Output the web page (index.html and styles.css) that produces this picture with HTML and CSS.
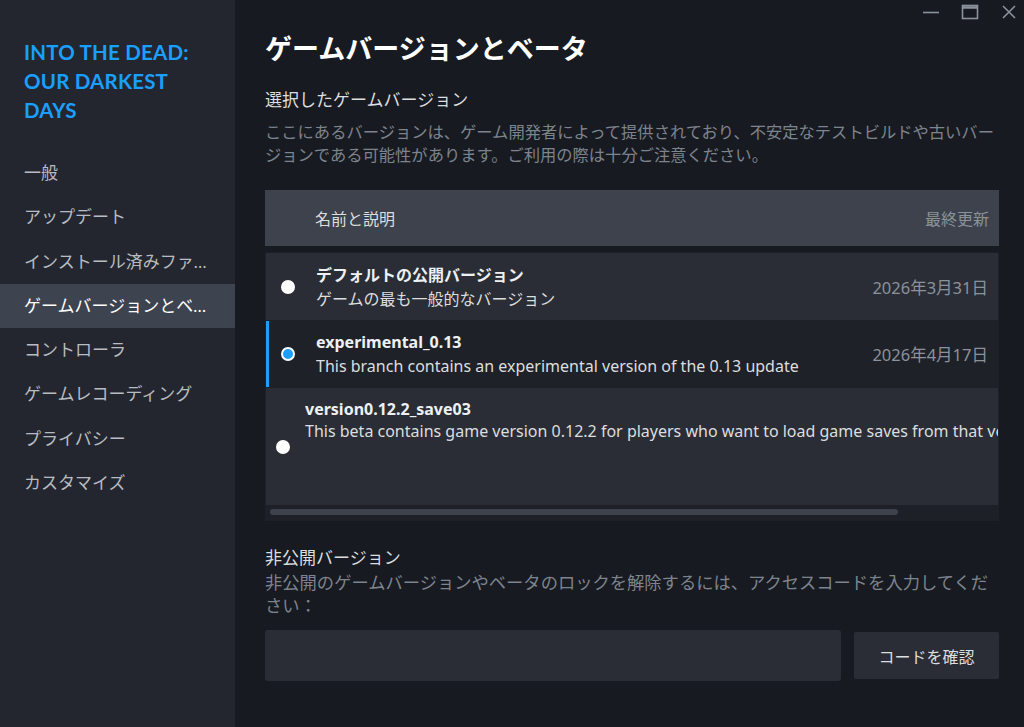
FILE: index.html
```html
<!DOCTYPE html>
<html lang="ja">
<head>
<meta charset="utf-8">
<title>ゲームバージョンとベータ</title>
<link rel="stylesheet" href="styles.css">
</head>
<body>
<div class="app">
  <aside class="sidebar">
    <div class="game-title">INTO THE DEAD:<br>OUR DARKEST<br>DAYS</div>
    <nav class="nav">
      <div class="nav-item">一般</div>
      <div class="nav-item">アップデート</div>
      <div class="nav-item">インストール済みファイル</div>
      <div class="nav-item active">ゲームバージョンとベータ</div>
      <div class="nav-item">コントローラ</div>
      <div class="nav-item">ゲームレコーディング</div>
      <div class="nav-item">プライバシー</div>
      <div class="nav-item">カスタマイズ</div>
    </nav>
  </aside>
  <main class="main">
    <div class="win-controls">
      <svg class="win-btn" width="18" height="18" viewBox="0 0 18 18"><path d="M1 9.5h16" stroke="#8b929a" stroke-width="1.6" fill="none"/></svg>
      <svg class="win-btn" width="18" height="18" viewBox="0 0 18 18"><rect x="1.5" y="2.5" width="15" height="13" stroke="#8b929a" stroke-width="1.6" fill="none"/><path d="M1.5 4.5h15" stroke="#8b929a" stroke-width="2.5"/></svg>
      <svg class="win-btn" width="18" height="18" viewBox="0 0 18 18"><path d="M3 3l12 12M15 3L3 15" stroke="#8b929a" stroke-width="1.6" fill="none"/></svg>
    </div>
    <h1 class="page-title">ゲームバージョンとベータ</h1>
    <h2 class="section-title">選択したゲームバージョン</h2>
    <p class="section-desc">ここにあるバージョンは、ゲーム開発者によって提供されており、不安定なテストビルドや古いバージョンである可能性があります。ご利用の際は十分ご注意ください。</p>

    <div class="table">
      <div class="thead">
        <span class="th-name">名前と説明</span>
        <span class="th-date">最終更新</span>
      </div>
      <div class="tbody">
        <div class="row">
          <span class="radio"></span>
          <div class="row-text">
            <div class="row-title">デフォルトの公開バージョン</div>
            <div class="row-desc">ゲームの最も一般的なバージョン</div>
          </div>
          <span class="row-date">2026年3月31日</span>
        </div>
        <div class="row selected">
          <span class="radio checked"></span>
          <div class="row-text">
            <div class="row-title">experimental_0.13</div>
            <div class="row-desc">This branch contains an experimental version of the 0.13 update</div>
          </div>
          <span class="row-date">2026年4月17日</span>
        </div>
        <div class="row tall">
          <span class="radio"></span>
          <div class="row-text top">
            <div class="row-title">version0.12.2_save03</div>
            <div class="row-desc nowrap">This beta contains game version 0.12.2 for players who want to load game saves from that version</div>
          </div>
        </div>
        <div class="hscroll"><div class="hscroll-thumb"></div></div>
      </div>
    </div>

    <h2 class="section-title private">非公開バージョン</h2>
    <p class="section-desc big">非公開のゲームバージョンやベータのロックを解除するには、アクセスコードを入力してください：</p>
    <div class="code-row">
      <div class="code-input"></div>
      <button class="code-btn">コードを確認</button>
    </div>
  </main>
</div>
</body>
</html>
```
FILE: styles.css
```css
* { box-sizing: border-box; }
html, body { margin: 0; padding: 0; }
body {
  background: #171a21;
  font-family: "Lato", "Noto Sans CJK JP", sans-serif;
  color: #dcdedf;
  overflow: hidden;
}
.app {
  display: flex;
  width: 1024px;
  height: 727px;
}
.sidebar {
  width: 235px;
  flex: 0 0 235px;
  background: #23262e;
  padding-top: 38px;
}
.game-title {
  padding: 0 24px;
  font-size: 20.5px;
  font-weight: 700;
  line-height: 29px;
  color: #1a9fff;
  letter-spacing: 0.2px;
}
.nav {
  margin-top: 26px;
  display: flex;
  flex-direction: column;
}
.nav-item {
  height: 44.3px;
  line-height: 44px;
  padding: 0 25px 0 24px;
  font-size: 17px;
  color: #b8bcc2;
  white-space: nowrap;
  overflow: hidden;
  text-overflow: ellipsis;
}
.nav-item.active {
  background: #3d4450;
  color: #ffffff;
}
.main {
  flex: 1;
  position: relative;
  padding: 31px 25px 0 30px;
}
.win-controls {
  position: absolute;
  top: 3px;
  right: 6px;
  display: flex;
  gap: 21px;
}
.win-btn { display: block; }
.page-title {
  margin: 0;
  font-size: 27px;
  line-height: 36px;
  font-weight: 700;
  color: #ffffff;
}
.section-title {
  margin: 21px 0 0;
  font-size: 17px;
  line-height: 24px;
  font-weight: 400;
  color: #dcdedf;
}
.section-title.private { margin-top: 25px; }
.section-desc {
  margin: 8px 0 0;
  font-size: 16.3px;
  line-height: 23px;
  color: #7d848d;
}
.section-desc.big {
  margin-top: 1px;
  font-size: 17.3px;
}
.table {
  margin-top: 24px;
  width: 734px;
}
.thead {
  height: 56px;
  background: #3d424d;
  display: flex;
  align-items: center;
  justify-content: space-between;
  padding: 0 10px 0 50px;
  font-size: 16px;
}
.th-name { color: #dcdedf; }
.th-date { color: #8b929a; }
.tbody {
  margin-top: 6px;
  background: #1d2027;
  padding: 1px 1px 5px 1px;
  display: flex;
  flex-direction: column;
  gap: 1px;
  overflow: hidden;
}
.row {
  height: 67px;
  background: #2a2d35;
  display: flex;
  align-items: center;
  padding: 0 10px 0 12px;
  gap: 21px;
  border-left: 3px solid transparent;
}
.row.selected {
  background: #1f2128;
  border-left-color: #1a9fff;
  height: 66px;
}
.row.tall {
  height: 117px;
  padding-left: 7px;
  padding-right: 0;
  gap: 15px;
  border-left: 3px solid #2a2d35;
}
.radio {
  flex: 0 0 14px;
  width: 14px;
  height: 14px;
  border-radius: 50%;
  background: #ffffff;
}
.radio.checked {
  background: #1a9fff;
  border: 2.5px solid #ffffff;
}
.row-text {
  flex: 1;
  min-width: 0;
  font-family: "Noto Sans", "Noto Sans CJK JP", sans-serif;
  font-size: 16px;
  line-height: 24px;
  overflow: hidden;
}
.row-text.top {
  align-self: flex-start;
  padding-top: 10px;
  line-height: 22px;
}
.row-title {
  font-weight: 700;
  color: #eef0f2;
}
.row-desc { color: #dcdedf; }
.nowrap { white-space: nowrap; }
.row-date {
  color: #8b929a;
  font-family: "Noto Sans", "Noto Sans CJK JP", sans-serif;
  font-size: 16.5px;
  white-space: nowrap;
}
.hscroll {
  height: 10px;
  padding: 3px 0 0 4px;
}
.hscroll-thumb {
  width: 628px;
  height: 6px;
  border-radius: 3px;
  background: #3d424d;
}
.code-row {
  margin-top: 13px;
  display: flex;
  align-items: center;
  gap: 13px;
}
.code-input {
  width: 576px;
  height: 51px;
  background: #2a2d35;
  border-radius: 3px;
}
.code-btn {
  width: 145px;
  height: 47px;
  border: none;
  border-radius: 2px;
  background: #2a2d35;
  color: #dcdedf;
  font-family: inherit;
  font-size: 16px;
}
```
